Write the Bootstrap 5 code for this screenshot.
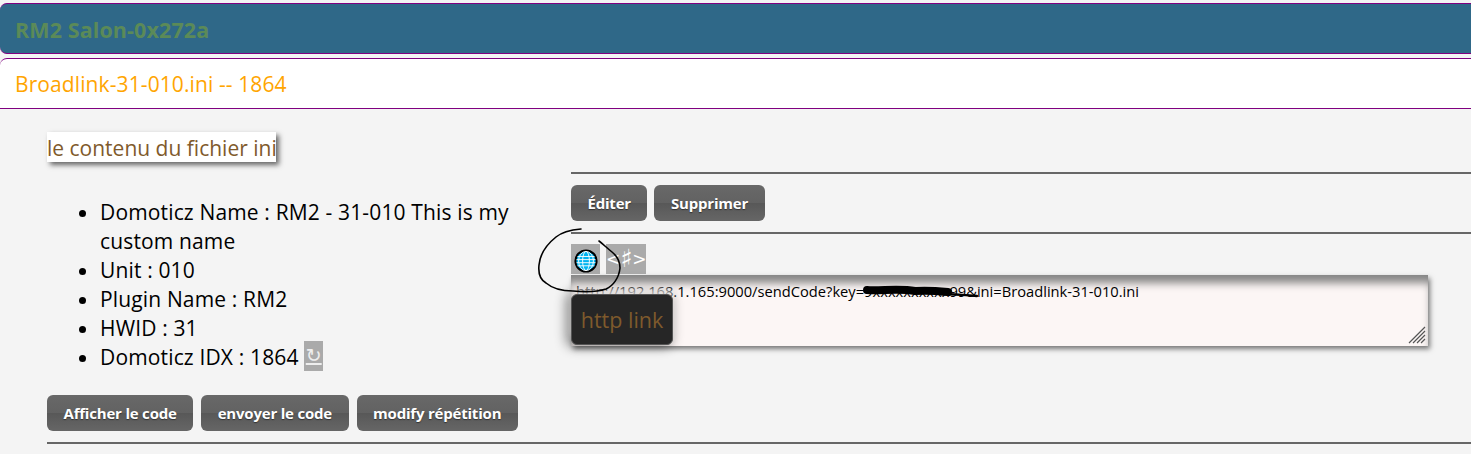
<!DOCTYPE html>
<html lang="fr">
<head>
    <meta charset="UTF-8">
    <title>RM2 Salon</title>
    <link href="https://cdn.jsdelivr.net/npm/bootstrap@5.3.0/dist/css/bootstrap.min.css" rel="stylesheet">
    <style>
        body {
            background-color: #f4f4f4;
            font-family: "Open Sans", "Noto Sans", sans-serif;
            padding-top: 3px;
            height: 454px;
            overflow: hidden;
            position: relative;
        }
        .bar {
            height: 51px;
            padding: 3px 0 0 15px;
            border-top: 1px solid #800080;
            border-bottom: 1px solid #800080;
            border-radius: 7px 0 0 7px;
        }
        .bar-main {
            background-color: #2f6888;
            color: #5b8a58;
            font-size: 21.5px;
            font-weight: 700;
            letter-spacing: .1px;
        }
        .bar-sub {
            margin-top: 4px;
            background-color: #fff;
            color: #ffa500;
            font-size: 21px;
            letter-spacing: .1px;
            border-radius: 7px 0 0 0;
        }
        .page-body {
            padding: 23px 0 0 47px;
        }
        .left-col {
            width: 524px;
        }
        .right-col {
            flex: 1;
            padding-top: 40px;
        }
        .ini-title {
            height: 30px;
            width: 229px;
            background-color: #fff;
            color: #7f5a2c;
            font-size: 21px;
            line-height: 32px;
            white-space: nowrap;
            box-shadow: 3px 3px 5px #666;
        }
        .ini-list {
            margin: 36px 0 0;
            padding-left: 53px;
            width: 490px;
            font-size: 21px;
            line-height: 29px;
            letter-spacing: .15px;
            color: #000;
        }
        .reload {
            display: inline-block;
            width: 19px;
            height: 30px;
            margin-top: -2px;
            line-height: 29px;
            vertical-align: top;
            text-align: center;
            background-color: #aaa;
            color: #eee;
            font-family: "DejaVu Sans", sans-serif;
            font-size: 19px;
            letter-spacing: 0;
            text-decoration: underline;
            text-decoration-thickness: 2px;
        }
        .grey-btn {
            height: 36px;
            padding: 0 16.5px;
            border: 0;
            border-radius: 6px;
            color: #fff;
            font-size: 15px;
            font-weight: 700;
            line-height: 37px;
            letter-spacing: -.2px;
            text-shadow: 0 1px 1px #333;
            background: linear-gradient(#686868 0%, #626262 50%, #585858 51%, #666 100%);
        }
        .grey-btn:hover {
            color: #fff;
        }
        .edit-row {
            gap: 7px;
        }
        .rule {
            height: 2px;
            background-color: #666;
            opacity: 1;
            border: 0;
            margin: 0;
        }
        .tab-globe,
        .tab-hash {
            height: 30px;
            background-color: #aaa;
        }
        .tab-globe {
            width: 29px;
            padding: 3px 3px;
        }
        .tab-hash {
            width: 40px;
            margin-left: 6px;
            color: #fff;
            font-family: "DejaVu Sans", sans-serif;
            font-size: 17px;
            line-height: 31px;
            text-align: center;
            white-space: nowrap;
        }
        .sharp-sign {
            font-size: 25px;
            line-height: 20px;
            vertical-align: -2px;
        }
        .link-wrap {
            position: relative;
            width: 857px;
            margin-top: 1px;
        }
        .link-box {
            display: block;
            width: 857px;
            height: 71px;
            padding: 5px 5px 0;
            border: 0;
            outline: 0;
            resize: none;
            background-color: #fcf6f5;
            color: #000;
            font-family: "Open Sans", sans-serif;
            font-size: 14.7px;
            box-shadow: inset 0 11px 8px -3px #858585, 2px 3px 5px #777;
        }
        .link-grip {
            position: absolute;
            right: 2px;
            bottom: 2px;
        }
        .link-tip {
            position: absolute;
            left: 0;
            top: 19px;
            width: 102px;
            height: 51px;
            background-color: #262626;
            border: 1px solid #555;
            border-radius: 6px;
            color: #7f5a2c;
            font-size: 21.5px;
            line-height: 49px;
            text-align: center;
            box-shadow: 0 -6px 6px rgba(250, 246, 245, .7), -3px 0 12px 2px rgba(0, 0, 0, .45);
        }
        .ink {
            position: absolute;
            left: 0;
            top: 0;
            pointer-events: none;
        }
    </style>
</head>
<body>
    <div class="bar bar-main d-flex align-items-center">RM2 Salon-0x272a</div>
    <div class="bar bar-sub d-flex align-items-center">Broadlink-31-010.ini -- 1864</div>

    <div class="page-body">
        <div class="d-flex">
            <div class="left-col">
                <div class="ini-title">le contenu du fichier ini</div>
                <ul class="ini-list">
                    <li>Domoticz Name : RM2 - 31-010 This is my custom name</li>
                    <li>Unit : 010</li>
                    <li>Plugin Name : RM2</li>
                    <li>HWID : 31</li>
                    <li>Domoticz IDX : 1864 <span class="reload">↻</span></li>
                </ul>
                <div class="d-flex gap-2" style="margin-top: 23px">
                    <button type="button" class="btn grey-btn">Afficher le code</button>
                    <button type="button" class="btn grey-btn">envoyer le code</button>
                    <button type="button" class="btn grey-btn">modify répétition</button>
                </div>
            </div>
            <div class="right-col">
                <hr class="rule">
                <div class="d-flex edit-row" style="margin-top: 11px">
                    <button type="button" class="btn grey-btn">Éditer</button>
                    <button type="button" class="btn grey-btn">Supprimer</button>
                </div>
                <hr class="rule" style="margin-top: 11px">
                <div class="d-flex" style="margin-top: 10px">
                    <div class="tab-globe">
                        <svg width="24" height="24" viewBox="0 0 24 24">
                            <circle cx="12" cy="12" r="10.6" fill="#00b4f0" stroke="#000" stroke-width="2"/>
                            <g fill="none" stroke="#fff" stroke-width=".9">
                                <ellipse cx="12" cy="12" rx="3.4" ry="9.6"/>
                                <ellipse cx="12" cy="12" rx="7.4" ry="9.6"/>
                                <path d="M3.5 7.5h17M2.5 10.6h19M2.5 13.7h19M3.5 16.8h17"/>
                            </g>
                        </svg>
                    </div>
                    <div class="tab-hash">&lt;<span class="sharp-sign">♯</span>&gt;</div>
                </div>
                <div class="link-wrap">
                    <textarea class="link-box" spellcheck="false">http://192.168.1.165:9000/sendCode?key=9xxxxxxxxxx99&amp;ini=Broadlink-31-010.ini</textarea>
                    <svg class="link-grip" width="18" height="18" viewBox="0 0 18 18" fill="none" stroke="#555" stroke-width="1.2">
                        <path d="M1 17L17 1M5 17L17 5M9 17L17 9M13 17L17 13"/>
                    </svg>
                    <div class="link-tip">http link</div>
                </div>
            </div>
        </div>
        <hr class="rule" style="margin-top: 11px">
    </div>

    <!-- hand drawn marks on top of the screenshot -->
    <svg class="ink" width="1471" height="454" viewBox="0 0 1471 454" fill="none" stroke="#000" stroke-linecap="round" stroke-linejoin="round">
        <path stroke-width="1.6" d="M581 229C570 230 562 232 556 237C546 245 540 254 539 265C538 274 541 280 546 283C553 289 563 291 573 291C585 292 597 292 606 289C613 286 619 278 620 268C620 262 617 256 612 252C607 248 603 244 599 241"/>
        <path stroke-width="8" d="M867 290C880 291 900 288 915 291C928 290 938 291 948 292"/>
        <path stroke-width="2.5" d="M940 294C950 294 965 295 977 296"/>
    </svg>
</body>
</html>
